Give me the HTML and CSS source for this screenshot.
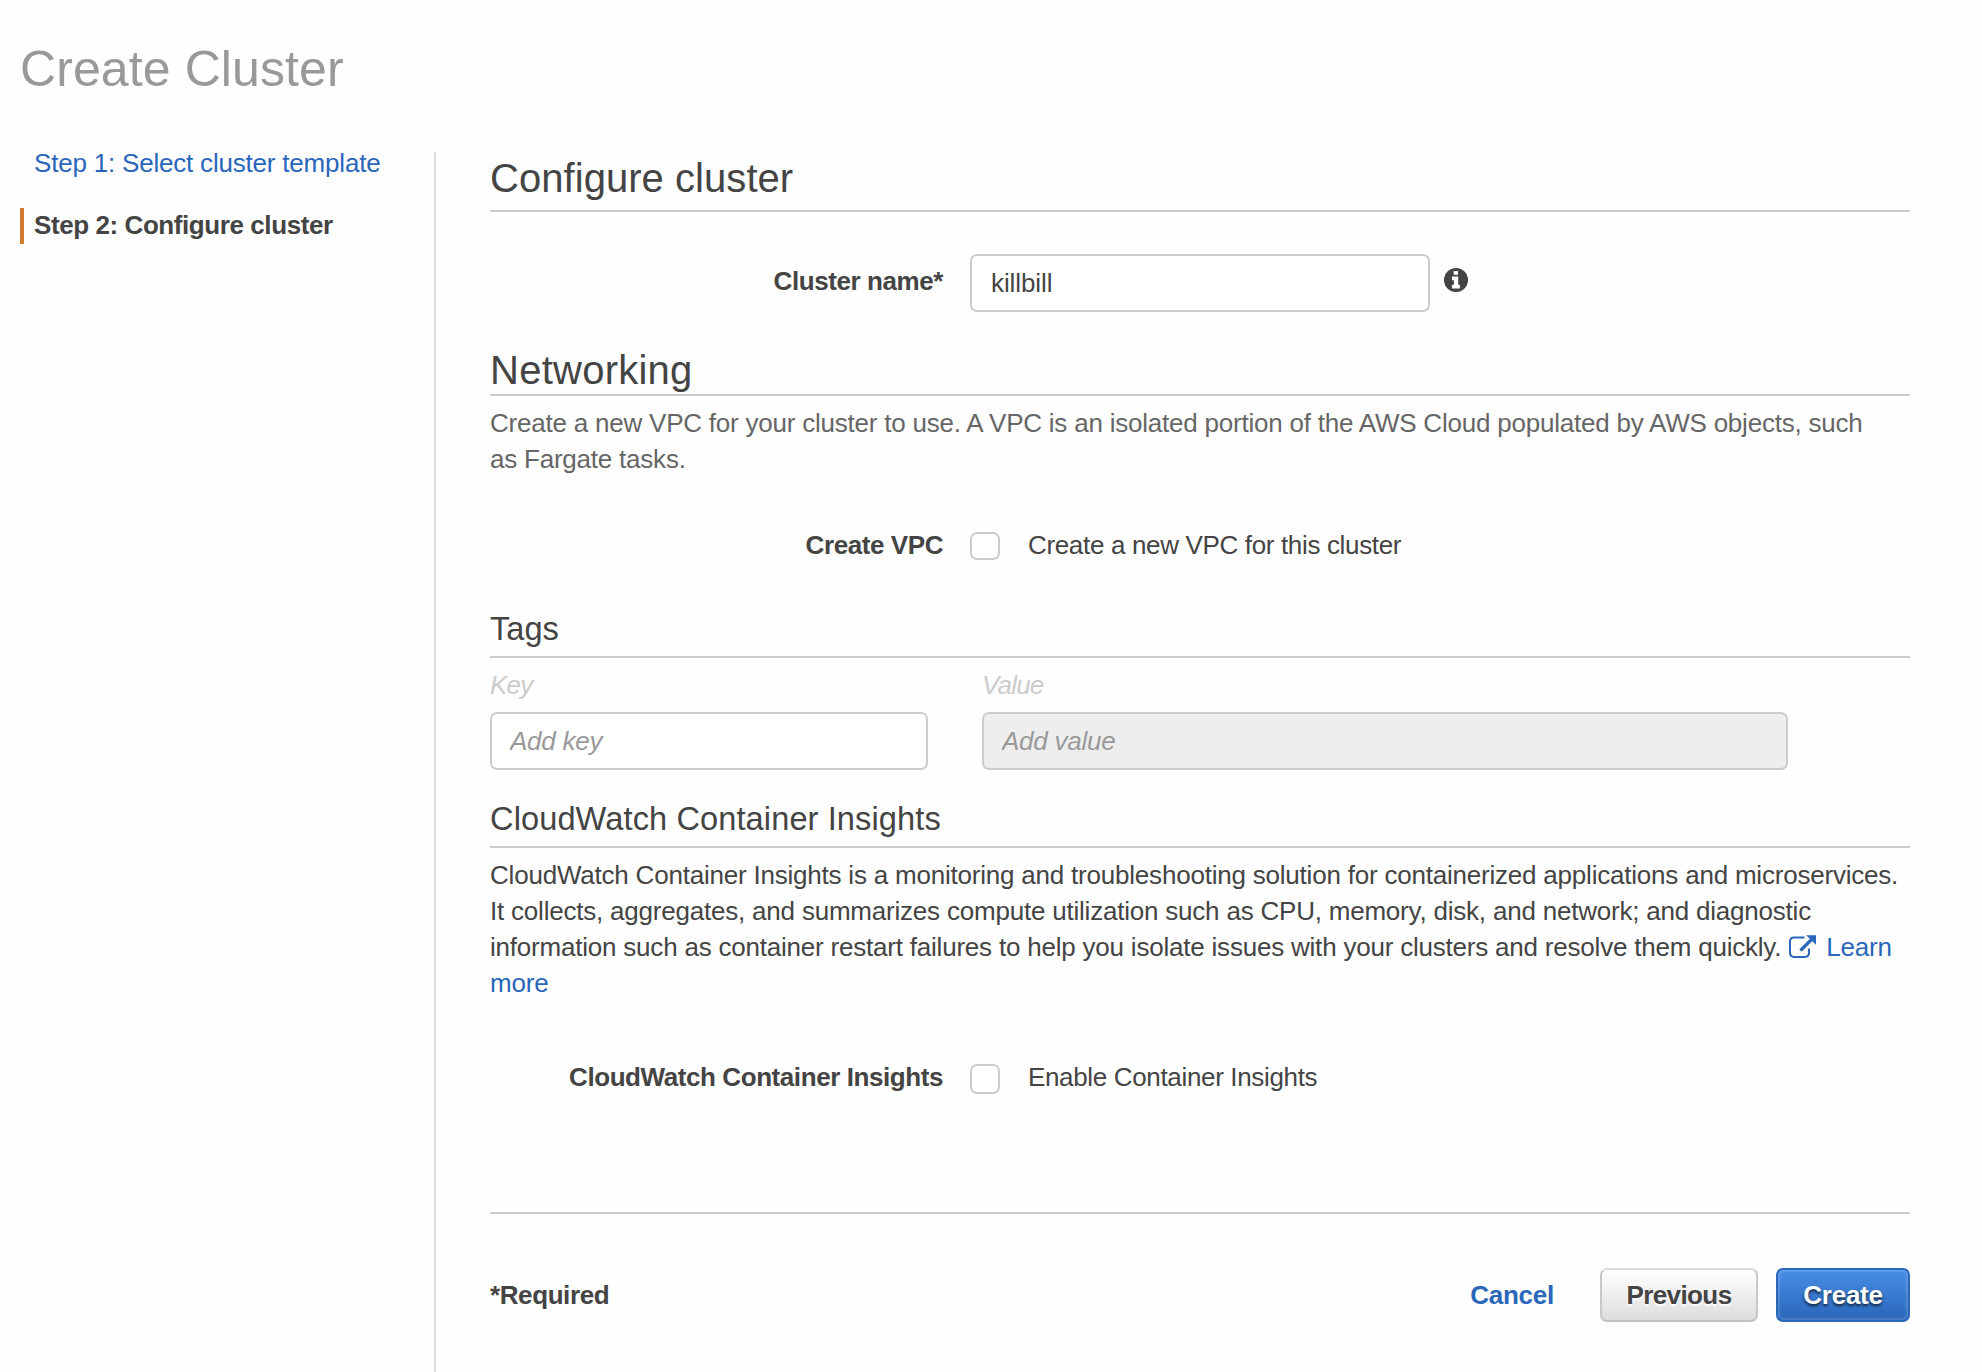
FILE: index.html
```html
<!DOCTYPE html>
<html lang="en">
<head>
<meta charset="utf-8">
<title>Create Cluster</title>
<link rel="stylesheet" href="styles.css">
</head>
<body>
<div class="page">
  <h1 class="page-title">Create Cluster</h1>
  <div class="wizard">
    <nav class="steps">
      <a class="step" href="#">Step 1: Select cluster template</a>
      <span class="step step-active">Step 2: Configure cluster</span>
    </nav>
    <main class="content">
      <h2 class="heading heading-first">Configure cluster</h2>
      <div class="row row-name">
        <label class="label" for="name">Cluster name*</label>
        <input class="input input-name" id="name" type="text" value="killbill">
        <svg class="info" viewBox="0 0 24 24"><circle cx="12" cy="12" r="12" fill="#444"/><path d="M9.7 3h4.3v3.7H9.7zM8 8.6h6.2v8.2h1.7v3.7H8v-3.7h1.9v-4.5H8z" fill="#fff"/></svg>
      </div>

      <h2 class="heading heading-network">Networking</h2>
      <p class="text text-muted">Create a new VPC for your cluster to use. A VPC is an isolated portion of the AWS Cloud populated by AWS objects, such<br>as Fargate tasks.</p>
      <div class="row row-vpc">
        <span class="label">Create VPC</span>
        <input class="check" id="vpc" type="checkbox">
        <label class="check-text" for="vpc">Create a new VPC for this cluster</label>
      </div>

      <h3 class="subheading subheading-tags">Tags</h3>
      <div class="tags">
        <div class="tag-field"><label class="tag-label" for="key">Key</label><input class="input" id="key" type="text" placeholder="Add key"></div>
        <div class="tag-field"><label class="tag-label" for="value">Value</label><input class="input" id="value" type="text" placeholder="Add value" disabled></div>
      </div>

      <h3 class="subheading subheading-insights">CloudWatch Container Insights</h3>
      <p class="text">CloudWatch Container Insights is a monitoring and troubleshooting solution for containerized applications and microservices.<br>It collects, aggregates, and summarizes compute utilization such as CPU, memory, disk, and network; and diagnostic<br>information such as container restart failures to help you isolate issues with your clusters and resolve them quickly. <a class="link" href="#"><svg class="external" viewBox="0 0 27 23"><path d="M15.500 2.600H5.200Q1 2.600 1 6.600v11.200q0 4.100 4.200 4.100h10.600q4.200 0 4.200-4.100V13.500" fill="none" stroke="#2a66ba" stroke-width="2"/><path d="M11.500 15.500 23 4" stroke="#2a66ba" stroke-width="3.200"/><path d="M17.200.3H27v9.500z" fill="#2a66ba"/></svg>Learn<br>more</a></p>
      <div class="row row-insights">
        <span class="label">CloudWatch Container Insights</span>
        <input class="check check-tall" id="insights" type="checkbox">
        <label class="check-text" for="insights">Enable Container Insights</label>
      </div>

      <footer class="footer">
        <span class="required">*Required</span>
        <a class="cancel" href="#">Cancel</a>
        <button class="button button-previous" type="button">Previous</button>
        <button class="button button-create" type="button">Create</button>
      </footer>
    </main>
  </div>
</div>
</body>
</html>
```
FILE: styles.css
```css
* { box-sizing: border-box; }

body {
  margin: 0;
  background: #fefefe;
  color: #444;
  font: 26px/36px "Liberation Sans", Arial, sans-serif;
  letter-spacing: -0.25px;
}

.page {
  display: flex;
  flex-direction: column;
  height: 1372px;
  overflow: hidden;
}

.page-title {
  margin: 0;
  padding: 39px 0 0 20px;
  height: 152px;
  font-size: 50px;
  font-weight: 400;
  line-height: 60px;
  letter-spacing: 0.1px;
  color: #999;
}

.wizard { display: flex; flex: 1; }

.steps {
  display: flex;
  flex-direction: column;
  gap: 26px;
  width: 434px;
  margin-top: -6px;
  padding-left: 20px;
}

.step {
  height: 36px;
  padding-left: 10px;
  border-left: 4px solid transparent;
  line-height: 34px;
  letter-spacing: -0.2px;
  color: #2a66ba;
  text-decoration: none;
}

.step-active {
  border-color: #d17c2f;
  color: #444;
  font-weight: 700;
  letter-spacing: -0.42px;
}

.content {
  width: 1476px;
  padding: 4px 0 0 54px;
  border-left: 2px solid #ddd;
}

.heading {
  margin: 0;
  border-bottom: 2px solid #ccc;
  font-size: 40px;
  font-weight: 400;
  line-height: 44px;
  letter-spacing: 0.05px;
}
.heading-first { padding-bottom: 10px; }
.heading-network { margin-top: 36px; padding-bottom: 2px; letter-spacing: 0.25px; }

.subheading {
  margin: 0;
  padding-bottom: 9px;
  border-bottom: 2px solid #ccc;
  font-size: 32.6px;
  font-weight: 400;
  line-height: 37px;
  letter-spacing: 0;
}
.subheading-tags { margin-top: 47px; }
.subheading-insights { margin-top: 30px; letter-spacing: 0.1px; }

.text { margin: 9px 0 0; letter-spacing: -0.21px; white-space: nowrap; }
.text-muted { color: #666; letter-spacing: -0.22px; }

.row { display: flex; align-items: flex-start; height: 36px; }
.row-name { height: 58px; margin-top: 42px; }
.row-name .label { margin-top: 9px; }
.row-vpc { margin-top: 50px; }
.row-insights { margin-top: 58px; }

.label {
  width: 453px;
  margin-right: 27px;
  font-weight: 700;
  letter-spacing: -0.42px;
  text-align: right;
}

.input {
  height: 58px;
  margin: 0;
  padding: 0 18px;
  border: 2px solid #ccc;
  border-radius: 7px;
  background: #fff;
  color: #444;
  font: inherit;
  letter-spacing: inherit;
}
.input::placeholder { color: #999; font-style: italic; opacity: 1; }
.input:disabled { background: #eee; }
.input-name { width: 460px; padding-left: 19px; letter-spacing: -0.1px; }

.info { width: 24px; height: 24px; margin: 14px 0 0 14px; }

.check {
  appearance: none;
  width: 30px;
  height: 28px;
  margin: 5px 28px 0 0;
  border: 2px solid #ccc;
  border-radius: 7px;
  background: #fff;
}
.check-tall { height: 30px; }
.check-text { letter-spacing: -0.34px; }

.tags {
  display: grid;
  grid-template-columns: 438px 806px;
  column-gap: 54px;
  margin-top: 9px;
}
.tag-field { display: flex; flex-direction: column; gap: 9px; }
.tag-label { color: #ccc; font-style: italic; letter-spacing: -0.8px; }

.link { color: #2a66ba; text-decoration: none; }
.external { width: 27px; height: 23px; margin: 0 10px 0 1px; vertical-align: -2px; }

.footer {
  display: flex;
  align-items: flex-start;
  margin-top: 117px;
  padding-top: 54px;
  border-top: 2px solid #ccc;
  font-weight: 700;
  line-height: 54px;
}
.required { flex: 1; letter-spacing: -0.4px; }
.cancel { margin-right: 46px; color: #2a66ba; text-decoration: none; }

.button {
  height: 54px;
  padding: 0;
  border-radius: 7px;
  font: inherit;
  letter-spacing: inherit;
}
.button-previous {
  width: 158px;
  margin-right: 18px;
  border: 2px solid #bfbfbf;
  border-top-color: #dcdcdc;
  border-left-color: #c8c8c8;
  border-right-color: #c8c8c8;
  background: linear-gradient(#fff, #ddd);
  color: #444;
  line-height: 50px;
  letter-spacing: -0.6px;
  text-shadow: 0 2px 2px #fff;
}
.button-create {
  width: 134px;
  border: 2px solid #2a66ba;
  background: linear-gradient(#478ee6, #2a66ba);
  box-shadow: inset 0 0 3px 1px rgba(255, 255, 255, 0.25);
  color: #fff;
  line-height: 50px;
  text-shadow: 0 2px 3px #123;
}
```
